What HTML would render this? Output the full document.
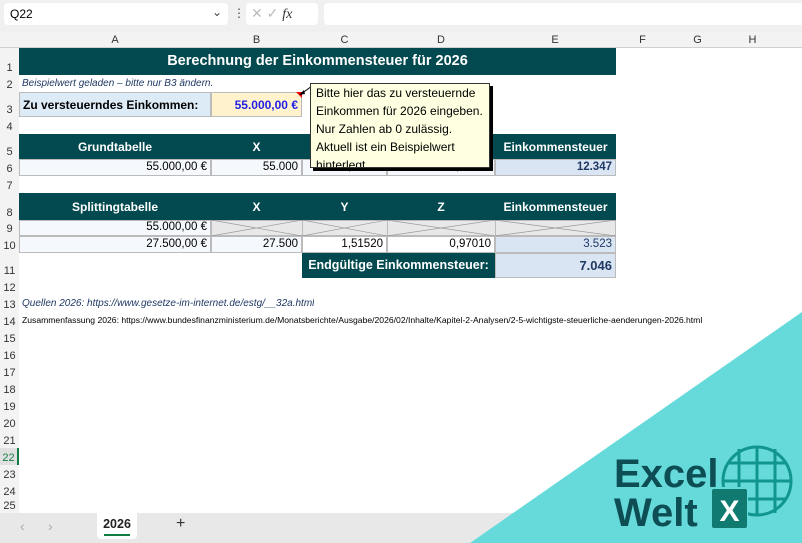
<!DOCTYPE html>
<html><head><meta charset="utf-8"><style>
*{margin:0;padding:0;box-sizing:border-box}
body{width:802px;height:543px;overflow:hidden;background:#fff;font-family:"Liberation Sans",sans-serif;position:relative}
.a{position:absolute}
.c{position:absolute;font-size:11.5px;line-height:1;display:flex;align-items:center;white-space:nowrap;overflow:hidden}
.r{justify-content:flex-end;padding-right:3px}
.m{justify-content:center}
.h{background:#024a50;color:#fff;font-weight:bold;font-size:12px}
.rh{position:absolute;left:0;width:19px;font-size:11px;color:#333;display:flex;align-items:flex-end;justify-content:center;padding-bottom:1px;background:#f3f3f3}
.ch{position:absolute;top:32px;height:16px;font-size:11px;color:#333;display:flex;align-items:center;justify-content:center}
</style></head><body>
<div class="a" style="left:0;top:0;width:802px;height:32px;background:#f0f0f0"></div>
<div class="a" style="left:4px;top:3px;width:224px;height:22px;background:#fff;border-radius:4px;font-size:12px;padding:4px 6px">Q22<span style="position:absolute;right:6px;top:2px;color:#444">⌄</span></div>
<div class="a" style="left:233px;top:6px;font-size:12px;color:#444">⋮</div>
<div class="a" style="left:246px;top:3px;width:72px;height:22px;background:#fff;border-radius:4px;font-size:14px;color:#bbb;padding:2px 5px">✕ ✓ <i style="color:#333;font-family:'Liberation Serif',serif">fx</i></div>
<div class="a" style="left:324px;top:3px;width:480px;height:22px;background:#fff;border-radius:4px"></div>
<div class="a" style="left:0;top:32px;width:802px;height:16px;background:#f3f3f3;border-bottom:1px solid #d0d0d0"></div>
<div class="a" style="left:0;top:48px;width:19px;height:465px;background:#f3f3f3;border-right:1px solid #d0d0d0"></div>
<div class="ch" style="left:19px;width:192px">A</div><div class="ch" style="left:211px;width:91px">B</div><div class="ch" style="left:302px;width:85px">C</div><div class="ch" style="left:387px;width:108px">D</div><div class="ch" style="left:495px;width:120px">E</div><div class="ch" style="left:615px;width:55px">F</div><div class="ch" style="left:670px;width:55px">G</div><div class="ch" style="left:725px;width:55px">H</div>
<div class="rh" style="top:48px;height:27px">1</div><div class="rh" style="top:75px;height:17px">2</div><div class="rh" style="top:92px;height:25px">3</div><div class="rh" style="top:117px;height:17px">4</div><div class="rh" style="top:134px;height:25px">5</div><div class="rh" style="top:159px;height:17px">6</div><div class="rh" style="top:176px;height:17px">7</div><div class="rh" style="top:193px;height:27px">8</div><div class="rh" style="top:220px;height:16px">9</div><div class="rh" style="top:236px;height:17px">10</div><div class="rh" style="top:253px;height:25px">11</div><div class="rh" style="top:278px;height:17px">12</div><div class="rh" style="top:295px;height:17px">13</div><div class="rh" style="top:312px;height:17px">14</div><div class="rh" style="top:329px;height:17px">15</div><div class="rh" style="top:346px;height:17px">16</div><div class="rh" style="top:363px;height:17px">17</div><div class="rh" style="top:380px;height:17px">18</div><div class="rh" style="top:397px;height:17px">19</div><div class="rh" style="top:414px;height:17px">20</div><div class="rh" style="top:431px;height:17px">21</div><div class="rh" style="top:448px;height:17px;background:#e0e0e0;color:#107c41;border-right:2px solid #107c41">22</div><div class="rh" style="top:465px;height:17px">23</div><div class="rh" style="top:482px;height:17px">24</div><div class="rh" style="top:499px;height:14px">25</div>
<div class="c h m" style="left:19px;top:48px;width:597px;height:27px;font-size:14.5px">Berechnung der Einkommensteuer für 2026</div>
<div class="c" style="left:22px;top:75px;height:17px;font-size:10px;font-style:italic;color:#1f3864">Beispielwert geladen – bitte nur B3 ändern.</div>
<div class="c" style="left:19px;top:92px;width:192px;height:25px;background:#ddebf7;border:1px solid #bbb;font-weight:bold;font-size:12px;padding-left:3px">Zu versteuerndes Einkommen:</div>
<div class="c r" style="left:211px;top:92px;width:91px;height:25px;background:#fff2cc;border:1px solid #bbb;font-weight:bold;font-size:12px;color:#1f1fe6">55.000,00 €</div>
<div class="a" style="left:296px;top:92px;width:0;height:0;border-left:6px solid transparent;border-top:6px solid #e00"></div>
<div class="c h m" style="left:19px;top:134px;width:192px;height:25px">Grundtabelle</div>
<div class="c h m" style="left:211px;top:134px;width:91px;height:25px">X</div>
<div class="c h m" style="left:302px;top:134px;width:85px;height:25px">Y</div>
<div class="c h m" style="left:387px;top:134px;width:108px;height:25px">Z</div>
<div class="c h m" style="left:495px;top:134px;width:121px;height:25px">Einkommensteuer</div>
<div class="c r" style="left:19px;top:159px;width:192px;height:17px;background:#f5f9fd;border:1px solid #bbb">55.000,00 €</div>
<div class="c r" style="left:211px;top:159px;width:91px;height:17px;background:#f5f9fd;border:1px solid #bbb">55.000</div>
<div class="c r" style="left:302px;top:159px;width:85px;height:17px;background:#f5f9fd;border:1px solid #bbb">1,20520</div>
<div class="c r" style="left:387px;top:159px;width:108px;height:17px;background:#f5f9fd;border:1px solid #bbb">0,72010</div>
<div class="c r" style="left:495px;top:159px;width:121px;height:17px;background:#dae5f3;border:1px solid #bbb;font-weight:bold;color:#1f3864">12.347</div>
<div class="c h m" style="left:19px;top:193px;width:192px;height:27px">Splittingtabelle</div>
<div class="c h m" style="left:211px;top:193px;width:91px;height:27px">X</div>
<div class="c h m" style="left:302px;top:193px;width:85px;height:27px">Y</div>
<div class="c h m" style="left:387px;top:193px;width:108px;height:27px">Z</div>
<div class="c h m" style="left:495px;top:193px;width:121px;height:27px">Einkommensteuer</div>
<div class="c r" style="left:19px;top:220px;width:192px;height:16px;background:#f5f9fd;border:1px solid #bbb">55.000,00 €</div>
<svg class="a" style="left:211px;top:220px" width="405" height="16">
<g fill="#e8e8e8" stroke="#bbb"><rect x="0.5" y="0.5" width="91" height="15"/><rect x="91.5" y="0.5" width="85" height="15"/><rect x="176.5" y="0.5" width="108" height="15"/><rect x="284.5" y="0.5" width="120" height="15"/></g>
<g stroke="#999" stroke-width="0.7"><path d="M0 0L91 16M0 16L91 0M91 0L176 16M91 16L176 0M176 0L284 16M176 16L284 0M284 0L405 16M284 16L405 0"/></g></svg>
<div class="c r" style="left:19px;top:236px;width:192px;height:17px;background:#f5f9fd;border:1px solid #bbb">27.500,00 €</div>
<div class="c r" style="left:211px;top:236px;width:91px;height:17px;background:#f5f9fd;border:1px solid #bbb">27.500</div>
<div class="c r" style="left:302px;top:236px;width:85px;height:17px;background:#fff;border:1px solid #bbb">1,51520</div>
<div class="c r" style="left:387px;top:236px;width:108px;height:17px;background:#fff;border:1px solid #bbb">0,97010</div>
<div class="c r" style="left:495px;top:236px;width:121px;height:17px;background:#dae5f3;border:1px solid #bbb;color:#1f3864">3.523</div>
<div class="c h m" style="left:302px;top:253px;width:193px;height:25px;font-size:12.5px">Endgültige Einkommensteuer:</div>
<div class="c r" style="left:495px;top:253px;width:121px;height:25px;background:#dae5f3;border:1px solid #bbb;font-weight:bold;font-size:13px;color:#1f3864">7.046</div>
<div class="c" style="left:22px;top:295px;height:17px;font-size:10px;font-style:italic;color:#1f3864">Quellen 2026: https://www.gesetze-im-internet.de/estg/__32a.html</div>
<div class="c" style="left:22px;top:312px;height:17px;font-size:8.6px;color:#000">Zusammenfassung 2026: https://www.bundesfinanzministerium.de/Monatsberichte/Ausgabe/2026/02/Inhalte/Kapitel-2-Analysen/2-5-wichtigste-steuerliche-aenderungen-2026.html</div>
<svg class="a" style="left:298px;top:84px" width="16" height="12"><path d="M14 2L3 10" stroke="#000"/><path d="M1 11L6 6L7 10Z" fill="#000"/></svg>
<div class="a" style="left:313px;top:86px;width:180px;height:85px;background:#000"></div>
<div class="a" style="left:310px;top:83px;width:180px;height:85px;background:#ffffe1;border:1px solid #333;font-size:12px;line-height:18px;padding:0 5px;color:#000;overflow:hidden;white-space:nowrap">Bitte hier das zu versteuernde<br>Einkommen für 2026 eingeben.<br>Nur Zahlen ab 0 zulässig.<br>Aktuell ist ein Beispielwert<br>hinterlegt.</div>
<div class="a" style="left:0;top:513px;width:802px;height:30px;background:#e8e8e8"></div>
<div class="a" style="left:20px;top:518px;font-size:14px;color:#aaa">‹</div>
<div class="a" style="left:48px;top:518px;font-size:14px;color:#aaa">›</div>
<div class="a" style="left:97px;top:513px;width:40px;height:26px;background:#fff;border-radius:0 0 4px 4px;font-size:12.5px;font-weight:bold;color:#222;text-align:center;padding-top:4px">2026<div style="margin:3px auto 0;width:26px;height:2px;background:#107c41"></div></div>
<div class="a" style="left:176px;top:515px;font-size:16px;color:#333">+</div>
<svg class="a" style="left:0;top:0" width="802" height="543">
<polygon points="470,543 802,312 802,543" fill="#66dada"/>
<g stroke="#11968f" stroke-width="3" fill="none">
<circle cx="757" cy="481" r="34"/>
<path d="M728 463H786M724 481H791M728 499H786M739 449V513M757 447V515M775 449V513"/>
</g>
<rect x="712" y="487" width="36" height="42" fill="#66dada"/>
<rect x="712" y="489" width="35" height="39" fill="#117a70" rx="2"/>
<text x="729.5" y="521" font-family="Liberation Sans" font-weight="bold" font-size="30" fill="#fff" text-anchor="middle">X</text>
<text x="614" y="487" font-family="Liberation Sans" font-weight="bold" font-size="40" fill="#0d4e54">Excel</text>
<text x="614" y="526" font-family="Liberation Sans" font-weight="bold" font-size="40" fill="#0d4e54">Welt</text>
</svg>
</body></html>
